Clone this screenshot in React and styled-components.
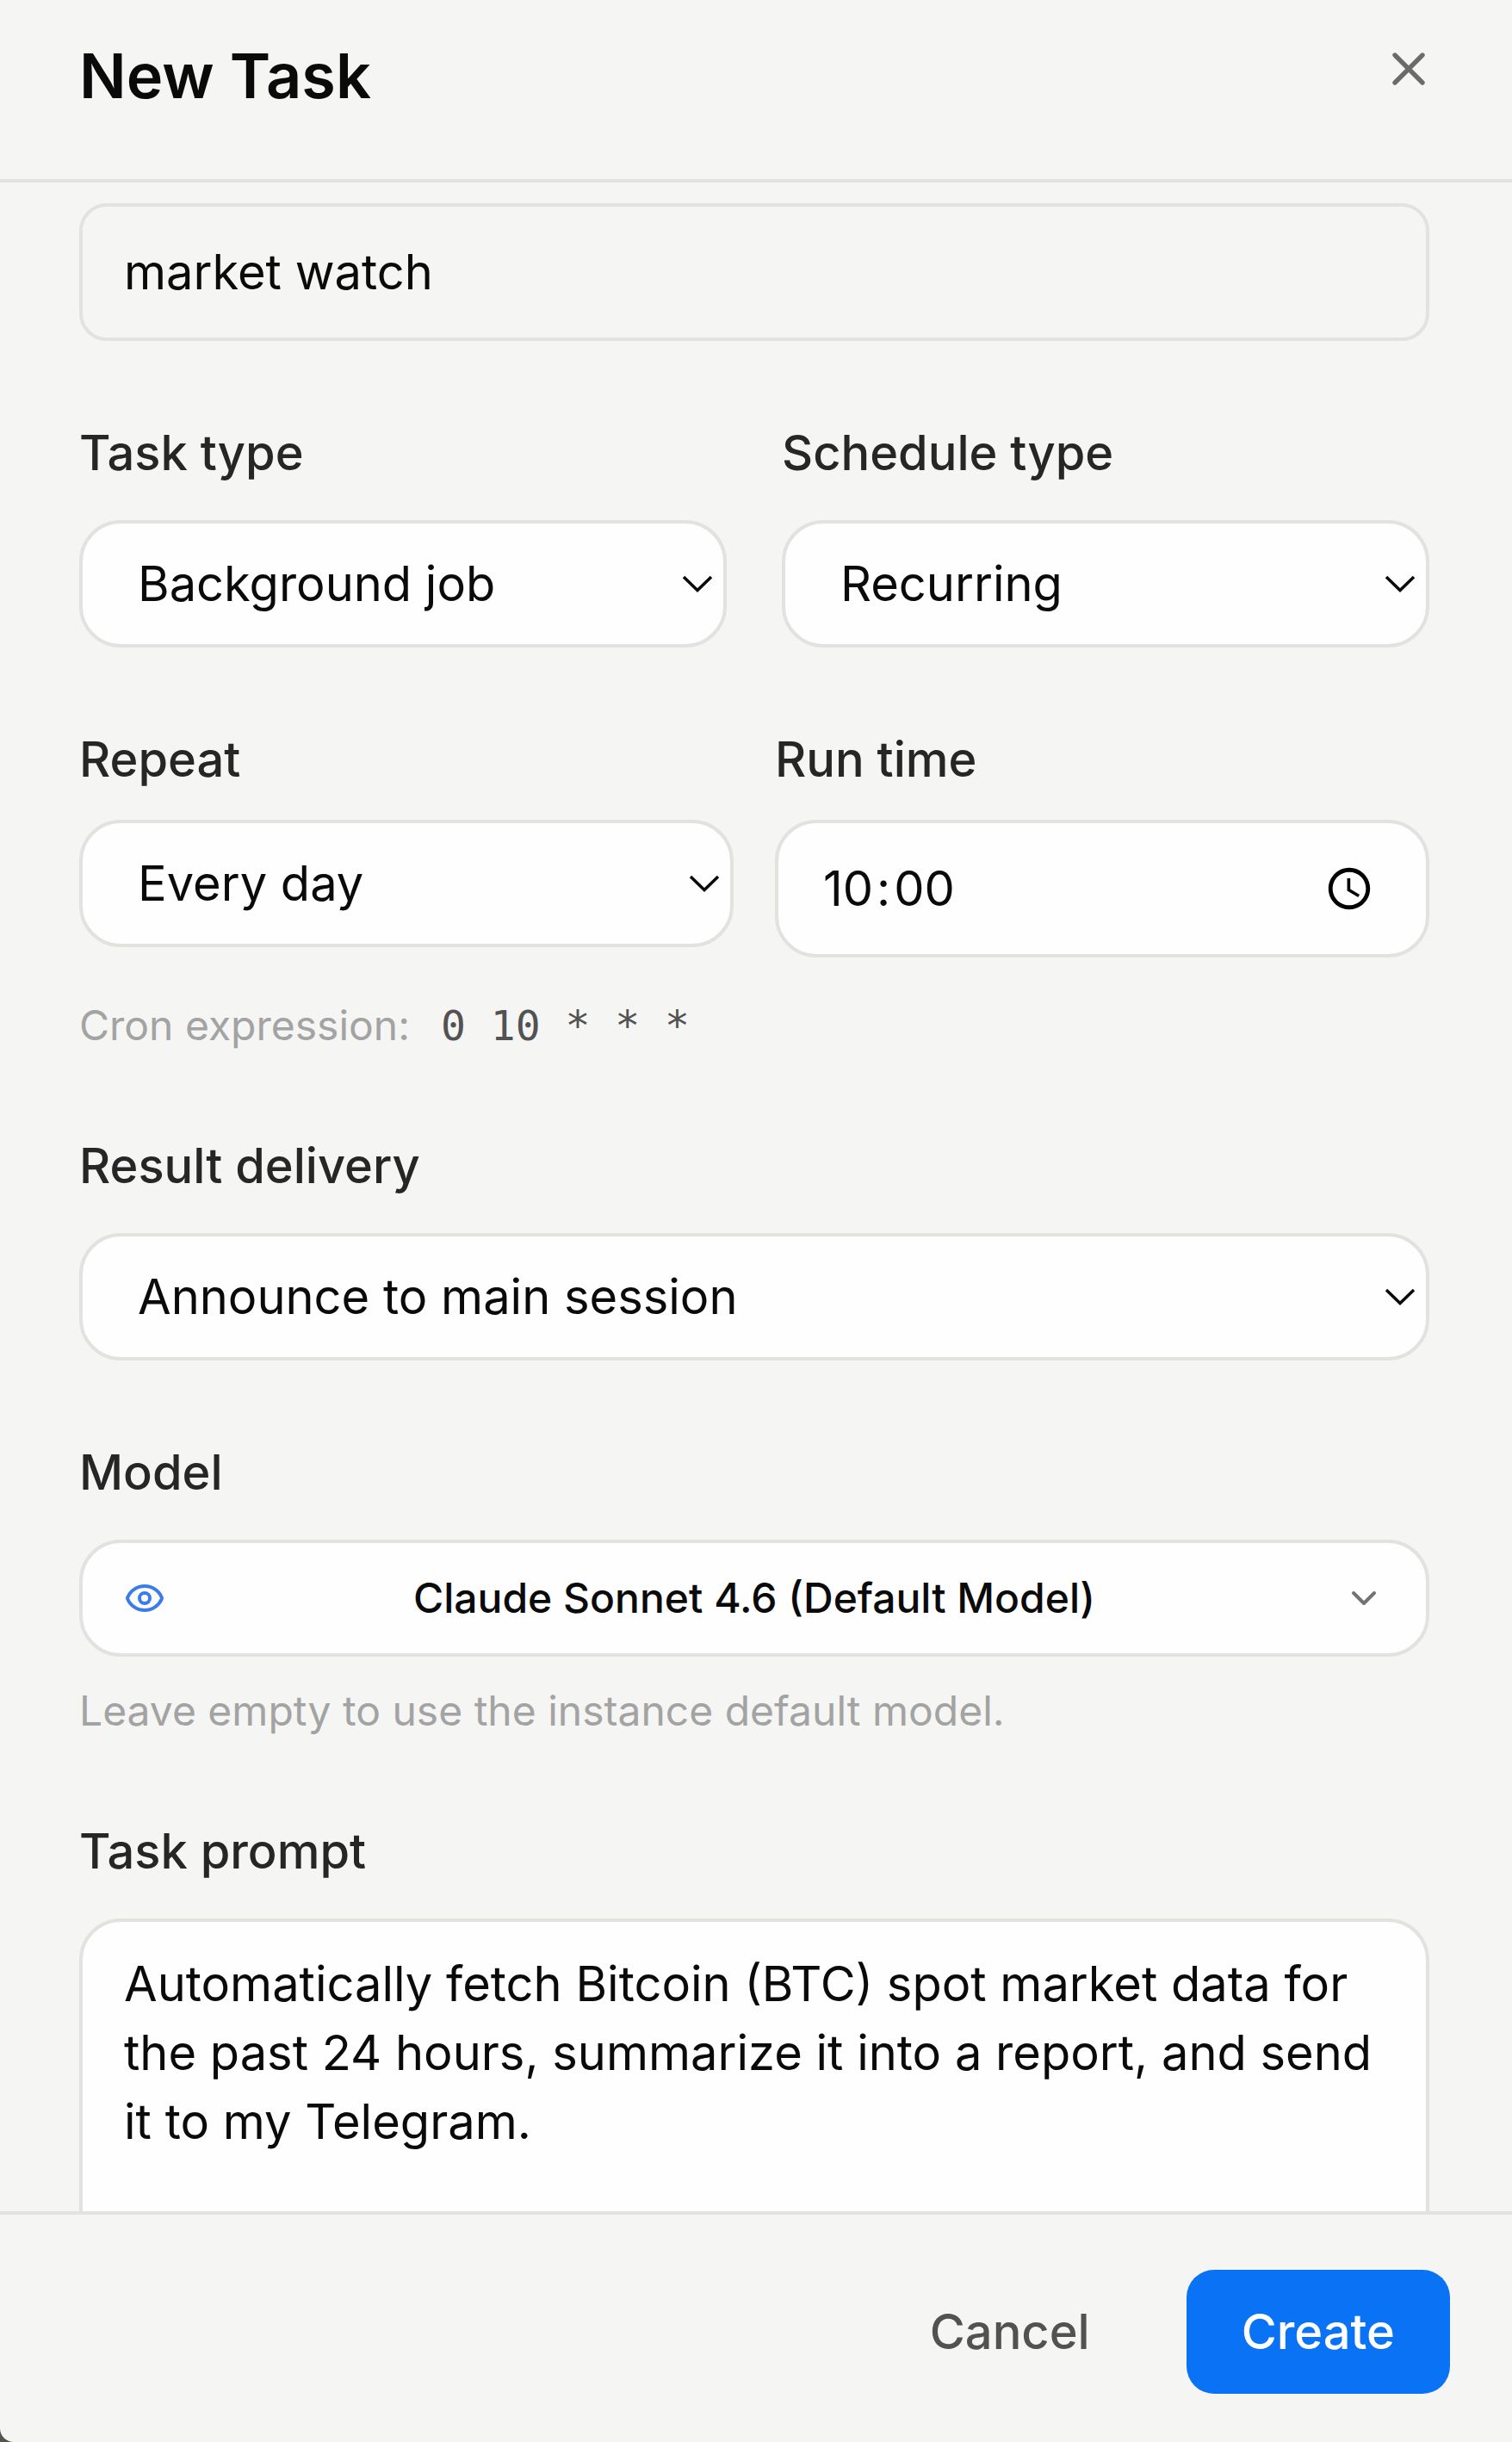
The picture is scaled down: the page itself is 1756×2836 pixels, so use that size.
import { useState } from "react";
import styled, { createGlobalStyle } from "styled-components";
import { ChevronDown, Eye, X } from "lucide-react";

const GlobalStyle = createGlobalStyle`
  * {
    box-sizing: border-box;
  }
  body {
    margin: 0;
    background-color: #57534f;
    font-family: "Inter", sans-serif;
    font-optical-sizing: none;
    color: #0a0a0a;
  }
  button,
  input,
  select,
  textarea {
    margin: 0;
    font-family: inherit;
    font-optical-sizing: none;
    color: inherit;
  }
`;

const Dialog = styled.div`
  height: 100vh;
  display: flex;
  flex-direction: column;
  overflow: hidden;
  background-color: #f5f5f4;
  border-bottom-left-radius: 16px;
`;
const Header = styled.header`
  display: flex;
  align-items: flex-start;
  justify-content: space-between;
  padding: 48px 88px 80px 92px;
  border-bottom: 4px solid #e2e2e1;
`;
const Title = styled.h1`
  margin: 0;
  font-size: 72px;
  line-height: 80px;
  font-weight: 600;
`;
const CloseButton = styled.button`
  display: flex;
  padding: 0;
  border: none;
  background: none;
  color: #6b6b6b;
  cursor: pointer;
`;
const Body = styled.form`
  flex: 1;
  min-height: 0;
  overflow-y: auto;
  scrollbar-width: none;
  display: flex;
  flex-direction: column;
  gap: 90px;
  padding: 24px 96px 96px 92px;
  > * {
    flex-shrink: 0;
  }
`;
const Row = styled.div`
  display: grid;
  grid-template-columns: 1fr 1fr;
  align-items: start;
  column-gap: ${(props) => props.$gap}px;
`;
const Field = styled.div`
  display: flex;
  flex-direction: column;
  min-width: 0;
`;
const Label = styled.label`
  margin-bottom: ${(props) => (props.$compact ? 30 : 38)}px;
  font-size: 56px;
  line-height: 80px;
  font-weight: 500;
  color: #262626;
`;
const TextInput = styled.input`
  width: 100%;
  height: 160px;
  padding: 0 48px;
  font-size: 56px;
  border: 4px solid #e2e2e1;
  border-radius: 32px;
  background-color: transparent;
`;
const TimeInput = styled(TextInput)`
  padding: 0 56px 0 48px;
  border-radius: 48px;
  background-color: #fefefe;
  &::-webkit-datetime-edit-hour-field,
  &::-webkit-datetime-edit-minute-field {
    padding: 0 4px;
  }
  &::-webkit-datetime-edit-ampm-field {
    display: none;
  }
`;
const SelectBox = styled.div`
  position: relative;
  svg {
    position: absolute;
    top: 64px;
    right: 15px;
    pointer-events: none;
  }
`;
const SelectInput = styled.select`
  display: block;
  width: 100%;
  height: 148px;
  padding: 0 64px;
  font-size: 56px;
  border: 4px solid #e2e2e1;
  border-radius: 48px;
  background-color: #fefefe;
  appearance: none;
`;
const ModelButton = styled.button`
  width: 100%;
  height: 136px;
  display: flex;
  align-items: center;
  padding: 0 48px;
  border: 4px solid #e2e2e1;
  border-radius: 48px;
  background-color: #fefefe;
  cursor: pointer;
  span {
    flex: 1;
    font-size: 48px;
    line-height: 64px;
    font-weight: 500;
  }
`;
const Hint = styled.p`
  margin: ${(props) => props.$top}px 0 0;
  font-size: 48px;
  line-height: 66px;
  color: #a3a3a3;
  code {
    margin-left: 36px;
    font-family: "DejaVu Sans Mono", monospace;
    font-size: 48px;
    line-height: 1;
    color: #525252;
  }
`;
const Prompt = styled.textarea`
  display: block;
  width: 100%;
  height: 480px;
  padding: 32px 48px;
  font-size: 56px;
  line-height: 80px;
  border: 4px solid #e2e2e1;
  border-radius: 48px;
  background-color: #fefefe;
  resize: none;
`;
const Footer = styled.footer`
  display: flex;
  justify-content: flex-end;
  gap: 48px;
  padding: 64px 72px 56px;
  border-top: 4px solid #e2e2e1;
`;
const FooterButton = styled.button`
  height: 144px;
  padding: 0 64px;
  font-size: 56px;
  font-weight: 500;
  border: none;
  border-radius: 32px;
  color: ${(props) => (props.$primary ? "#ffffff" : "#525252")};
  background-color: ${(props) => (props.$primary ? "#0a72f5" : "transparent")};
  cursor: pointer;
`;

const Select = ({ id, options }) => {
  const [value, setValue] = useState(options[0]);

  return (
    <SelectBox>
      <SelectInput
        id={id}
        value={value}
        onChange={(e) => setValue(e.target.value)}
      >
        {options.map((option) => (
          <option key={option}>{option}</option>
        ))}
      </SelectInput>
      <svg width="38" height="22" viewBox="0 0 38 22" fill="none">
        <path d="M3 2L19 17.5L35 2" stroke="#0a0a0a" strokeWidth="3.5" />
      </svg>
    </SelectBox>
  );
};

const App = () => {
  const [name, setName] = useState("market watch");
  const [time, setTime] = useState("10:00");
  const [prompt, setPrompt] = useState(
    "Automatically fetch Bitcoin (BTC) spot market data for the past 24 hours, summarize it into a report, and send it to my Telegram."
  );

  return (
    <Dialog role="dialog" aria-labelledby="dialog-title">
      <GlobalStyle />
      <Header>
        <Title id="dialog-title">New Task</Title>
        <CloseButton type="button" aria-label="Close">
          <X size={64} />
        </CloseButton>
      </Header>
      <Body id="task-form" onSubmit={(e) => e.preventDefault()}>
        <TextInput
          aria-label="Task name"
          value={name}
          onChange={(e) => setName(e.target.value)}
        />
        <Row $gap={64}>
          <Field>
            <Label htmlFor="task-type">Task type</Label>
            <Select id="task-type" options={["Background job"]} />
          </Field>
          <Field>
            <Label htmlFor="schedule-type">Schedule type</Label>
            <Select id="schedule-type" options={["Recurring"]} />
          </Field>
        </Row>
        <div>
          <Row $gap={48}>
            <Field>
              <Label htmlFor="repeat" $compact>
                Repeat
              </Label>
              <Select id="repeat" options={["Every day"]} />
            </Field>
            <Field>
              <Label htmlFor="run-time" $compact>
                Run time
              </Label>
              <TimeInput
                id="run-time"
                type="time"
                value={time}
                onChange={(e) => setTime(e.target.value)}
              />
            </Field>
          </Row>
          <Hint $top={46}>
            Cron expression:
            <code>0 10 * * *</code>
          </Hint>
        </div>
        <Field>
          <Label htmlFor="delivery">Result delivery</Label>
          <Select id="delivery" options={["Announce to main session"]} />
        </Field>
        <Field>
          <Label htmlFor="model">Model</Label>
          <ModelButton id="model" type="button">
            <Eye size={48} color="#3b7de8" />
            <span>Claude Sonnet 4.6 (Default Model)</span>
            <ChevronDown size={48} color="#737373" />
          </ModelButton>
          <Hint $top={30}>Leave empty to use the instance default model.</Hint>
        </Field>
        <Field>
          <Label htmlFor="prompt">Task prompt</Label>
          <Prompt
            id="prompt"
            value={prompt}
            onChange={(e) => setPrompt(e.target.value)}
          />
        </Field>
      </Body>
      <Footer>
        <FooterButton type="button">Cancel</FooterButton>
        <FooterButton type="submit" form="task-form" $primary>
          Create
        </FooterButton>
      </Footer>
    </Dialog>
  );
};

export default App;
